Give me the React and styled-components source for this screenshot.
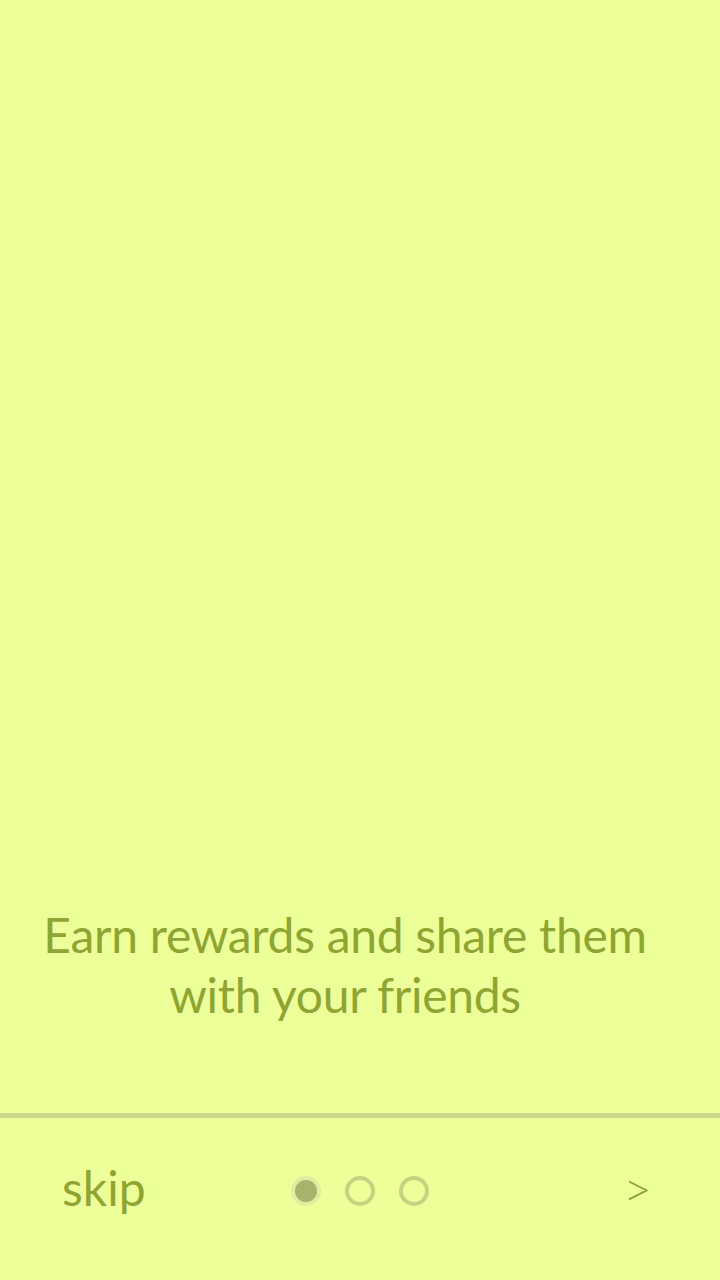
import React from "react";
import styled, { createGlobalStyle } from "styled-components";

const Global = createGlobalStyle`
  html, body {
    margin: 0;
    padding: 0;
    background: #edff99;
  }
`;

const Screen = styled.div`
  display: flex;
  flex-direction: column;
  width: 720px;
  height: 1280px;
  background: #edff99;
  font-family: Lato, "Open Sans", sans-serif;
  color: #8fa532;
`;

const Slide = styled.div`
  flex: 1;
  display: flex;
  flex-direction: column;
  justify-content: flex-end;
  padding: 0 30px 88px 0;
`;

const Caption = styled.h1`
  margin: 0;
  font-weight: 400;
  font-size: 48px;
  line-height: 60px;
  text-align: center;
  letter-spacing: -0.3px;
`;

const Divider = styled.div`
  height: 5px;
  background: #ccd98a;
`;

const Footer = styled.div`
  height: 162px;
  box-sizing: border-box;
  display: grid;
  grid-template-columns: 1fr auto 1fr;
  align-items: center;
  padding: 0 68px 16px 62px;
`;

const Skip = styled.span`
  font-size: 48px;
  justify-self: start;
  margin-top: -8px;
`;

const Dots = styled.div`
  display: flex;
  gap: 24px;
  margin-left: 6px;
`;

const Dot = styled.span`
  width: 30px;
  height: 30px;
  box-sizing: border-box;
  border-radius: 50%;
  border: 4px solid ${({ $active }) => ($active ? "#e0eca0" : "#c6d27f")};
  background: ${({ $active }) => ($active ? "#a6b36c" : "transparent")};
`;

const Next = styled.span`
  justify-self: end;
  font-size: 50px;
  font-weight: 300;
  margin-top: -6px;
`;

export default function App() {
  return (
    <Screen>
      <Global />
      <Slide>
        <Caption>
          Earn rewards and share them
          <br />
          with your friends
        </Caption>
      </Slide>
      <Divider />
      <Footer>
        <Skip>skip</Skip>
        <Dots>
          <Dot $active />
          <Dot />
          <Dot />
        </Dots>
        <Next>&gt;</Next>
      </Footer>
    </Screen>
  );
}
